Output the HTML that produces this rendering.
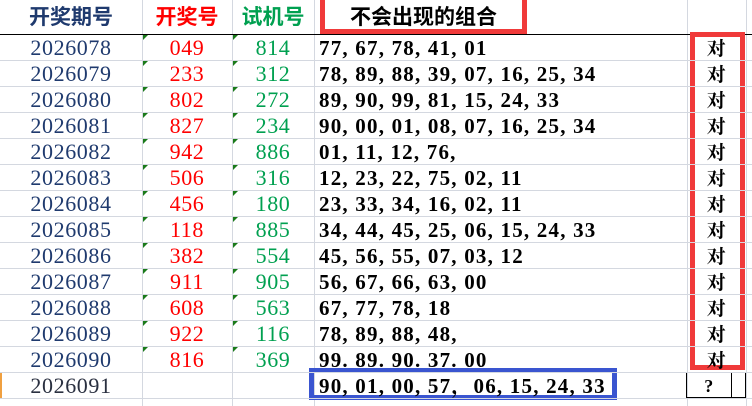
<!DOCTYPE html>
<html><head><meta charset="utf-8"><style>
body{margin:0;width:752px;height:406px;background:#fff;overflow:hidden;position:relative;font-family:"Liberation Serif","Noto Serif CJK SC",serif}
.h{position:absolute;left:0;width:752px;height:1px;background:#d4d8e0}
.v{position:absolute;top:0;height:406px;width:1px;background:#d4d8e0}
.t{position:absolute;font-size:22px;line-height:26px;white-space:pre;letter-spacing:0.6px}
.c{text-align:center}
.tri{position:absolute;width:0;height:0;border-top:5px solid #1a7a1a;border-right:5px solid transparent}
.hd{position:absolute;top:0;height:34px;line-height:36px;font-size:21px;font-weight:bold;font-family:"Liberation Sans","Noto Sans CJK SC",sans-serif;text-align:center}
.cb{font-weight:bold;letter-spacing:1.2px;font-size:21px}
</style></head><body>
<div class="v" style="left:142px"></div><div class="v" style="left:232px"></div><div class="v" style="left:314px"></div><div class="v" style="left:687px"></div><div class="v" style="left:746px"></div>
<div style="position:absolute;left:0;top:34px;width:752px;height:1px;background:#000"></div>
<div class="hd" style="left:0;width:142px;color:#1f3a6e">开奖期号</div>
<div class="hd" style="left:142px;width:90px;color:#f00">开奖号</div>
<div class="hd" style="left:232px;width:82px;color:#00a050">试机号</div>
<div class="hd" style="left:320px;width:207px;color:#000">不会出现的组合</div>
<div style="position:absolute;left:320px;top:-5px;width:197px;height:29px;border:5px solid #f03a3a"></div>
<div style="position:absolute;left:690px;top:32px;width:45px;height:328px;border:5px solid #f03a3a"></div>
<div style="position:absolute;left:686px;top:372px;width:60px;height:26px;border:1px solid #000;box-sizing:border-box"></div>
<div style="position:absolute;left:731px;top:372px;width:1px;height:26px;background:#000"></div>
<div style="position:absolute;left:309px;top:368px;width:298px;height:22px;border:5px solid #3a55d0"></div>
<div style="position:absolute;left:0;top:372px;width:2px;height:26px;background:#f0a040"></div>
<div id="r"></div>
<script>
var d=[["2026078","049","814","77, 67, 78, 41, 01"],["2026079","233","312","78, 89, 88, 39, 07, 16, 25, 34"],["2026080","802","272","89, 90, 99, 81, 15, 24, 33"],["2026081","827","234","90, 00, 01, 08, 07, 16, 25, 34"],["2026082","942","886","01, 11, 12, 76,"],["2026083","506","316","12, 23, 22, 75, 02, 11"],["2026084","456","180","23, 33, 34, 16, 02, 11"],["2026085","118","885","34, 44, 45, 25, 06, 15, 24, 33"],["2026086","382","554","45, 56, 55, 07, 03, 12"],["2026087","911","905","56, 67, 66, 63, 00"],["2026088","608","563","67, 77, 78, 18"],["2026089","922","116","78, 89, 88, 48,"],["2026090","816","369","99. 89. 90. 37. 00"]];
var h="";
for(var i=0;i<14;i++){h+='<div class="h" style="top:'+(60+i*26)+'px"></div>';}
for(var i=0;i<d.length;i++){var y=35+i*26;
h+='<div class="t c" style="left:0;width:142px;top:'+y+'px;color:#1f3a6e">'+d[i][0]+'</div>';
h+='<div class="t c" style="left:142px;width:90px;top:'+y+'px;color:#f00">'+d[i][1]+'</div>';
h+='<div class="t c" style="left:232px;width:82px;top:'+y+'px;color:#00a050">'+d[i][2]+'</div>';
h+='<div class="t cb" style="left:319px;top:'+y+'px;color:#000">'+d[i][3]+'</div>';
h+='<div class="t c" style="left:687px;width:59px;top:'+y+'px;color:#000;font-family:\'Noto Serif CJK SC\',serif;font-size:19px;font-weight:bold">对</div>';
h+='<div class="tri" style="left:143px;top:'+(y)+'px"></div><div class="tri" style="left:233px;top:'+(y)+'px"></div>';}
h+='<div class="t c" style="left:0;width:142px;top:373px;color:#2a3040">2026091</div>';
h+='<div class="t cb" style="left:319px;top:373px;color:#000">90, 01, 00, 57，06, 15, 24, 33</div>';
h+='<div class="t c" style="left:687px;width:44px;top:373px;color:#000;font-weight:bold;font-size:18px">?</div>';
document.getElementById("r").innerHTML=h;
</script>
</body></html>
